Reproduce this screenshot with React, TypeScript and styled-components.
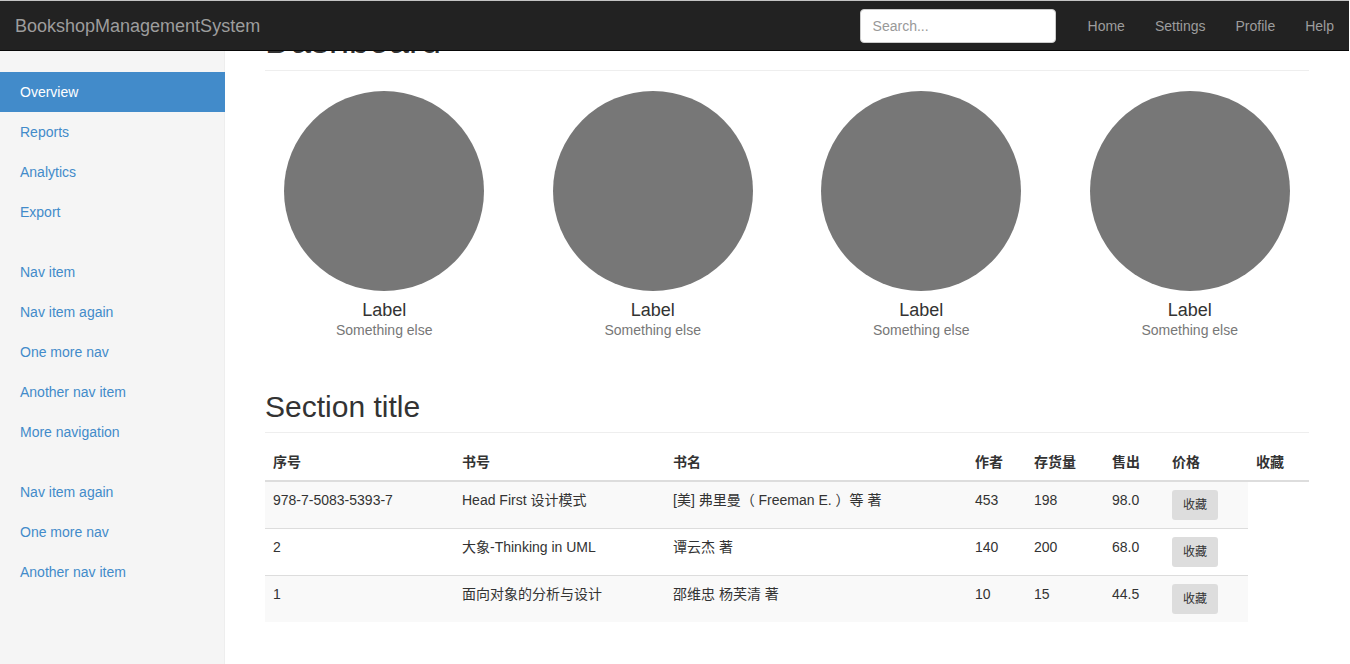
import React from "react";
import styled, { createGlobalStyle } from "styled-components";

const GlobalStyle = createGlobalStyle`
  html, body { margin: 0; padding: 0; }
  body {
    font-family: "Liberation Sans", Arial, "Noto Sans CJK SC", sans-serif;
    font-size: 14px;
    line-height: 1.428571;
    color: #333;
    background: #fff;
    overflow: hidden;
  }
  * { box-sizing: border-box; }
`;

const Navbar = styled.nav`
  position: fixed;
  top: 0;
  left: 0;
  right: 1px;
  height: 51px;
  z-index: 10;
  background: #222;
  border-top: 1px solid #c4c4c4;
  border-bottom: 1px solid #080808;
  display: flex;
  align-items: center;
  padding: 0 0 0 15px;
`;

const Brand = styled.a`
  font-size: 18px;
  line-height: 20px;
  color: #9d9d9d;
  text-decoration: none;
`;

const RightGroup = styled.div`
  margin-left: auto;
  display: flex;
  align-items: center;
`;

const SearchForm = styled.form`
  padding: 0 17px 0 15px;
  margin: 0;
  display: flex;
`;

const SearchInput = styled.input`
  width: 196px;
  height: 34px;
  padding: 6px 12px;
  font-family: inherit;
  font-size: 14px;
  color: #555;
  background: #fff;
  border: 1px solid #ccc;
  border-radius: 4px;
  outline: none;
  &::placeholder { color: #999; }
`;

const NavLinks = styled.ul`
  list-style: none;
  margin: 0;
  padding: 0;
  display: flex;
`;

const NavLink = styled.a`
  display: block;
  padding: 15px;
  line-height: 20px;
  color: #9d9d9d;
  text-decoration: none;
`;

const Page = styled.div`
  display: flex;
  min-height: 100vh;
  margin-right: 1px;
`;

const Sidebar = styled.aside`
  width: 225px;
  flex: none;
  background: #f5f5f5;
  border-right: 1px solid #eee;
  padding-top: 72px;
  min-height: 100vh;
`;

const SideNav = styled.ul`
  list-style: none;
  margin: 0 -1px 20px 0;
  padding: 0;
`;

const SideLink = styled.a<{ $active?: boolean }>`
  display: block;
  padding: 10px 20px;
  line-height: 20px;
  text-decoration: none;
  color: ${(p) => (p.$active ? "#fff" : "#428bca")};
  background: ${(p) => (p.$active ? "#428bca" : "transparent")};
`;

const Main = styled.main`
  flex: 1;
  min-width: 0;
  padding: 21px 40px 0;
`;

const PageHeader = styled.h1`
  margin: 0 0 20px;
  padding-bottom: 9px;
  font-size: 36px;
  font-weight: 500;
  line-height: 1.1;
  border-bottom: 1px solid #eee;
`;

const Placeholders = styled.div`
  display: grid;
  grid-template-columns: repeat(4, 1fr);
  margin: 0 -15px 30px;
  text-align: center;
`;

const Placeholder = styled.div`
  padding: 0 15px 20px;
`;

const Circle = styled.div`
  width: 200px;
  height: 200px;
  margin: 0 auto;
  border-radius: 50%;
  background: #777;
`;

const PlaceholderLabel = styled.h4`
  margin: 9px 0 0;
  font-size: 18px;
  font-weight: 500;
  line-height: 20px;
`;

const Muted = styled.span`
  display: block;
  color: #777;
  line-height: 20px;
`;

const SubHeader = styled.h2`
  margin: 0 0 11px;
  padding-bottom: 9px;
  font-size: 30px;
  font-weight: 500;
  line-height: 33px;
  border-bottom: 1px solid #eee;
`;

const Table = styled.table`
  width: 100%;
  table-layout: fixed;
  border-collapse: collapse;
  border-spacing: 0;
`;

const Col = styled.col<{ $w: number }>`
  width: ${(p) => p.$w}px;
`;

const Th = styled.th`
  text-align: left;
  font-weight: bold;
  padding: 8px;
  line-height: 20px;
  vertical-align: bottom;
  border-bottom: 2px solid #ddd;
  white-space: nowrap;
`;

const Row = styled.tr`
  &:nth-of-type(odd) { background: #f9f9f9; }
`;

const Td = styled.td`
  padding: 8px;
  line-height: 20px;
  vertical-align: top;
  border-top: 1px solid #ddd;
  white-space: nowrap;
`;

const FavButton = styled.button`
  display: block;
  height: 30px;
  padding: 0 11px;
  font-family: inherit;
  font-size: 12px;
  line-height: 30px;
  color: #333;
  background: #ddd;
  border: 0;
  border-radius: 3px;
`;

const group1 = ["Overview", "Reports", "Analytics", "Export"];
const group2 = ["Nav item", "Nav item again", "One more nav", "Another nav item", "More navigation"];
const group3 = ["Nav item again", "One more nav", "Another nav item"];

const headers = ["序号", "书号", "书名", "作者", "存货量", "售出", "价格", "收藏"];
const widths = [189, 211, 302, 59, 78, 60, 84, 61];

const books = [
  ["978-7-5083-5393-7", "Head First 设计模式", "[美] 弗里曼（ Freeman E. ）等 著", "453", "198", "98.0"],
  ["2", "大象-Thinking in UML", "谭云杰 著", "140", "200", "68.0"],
  ["1", "面向对象的分析与设计", "邵维忠 杨芙清 著", "10", "15", "44.5"],
];

export default function App() {
  return (
    <>
      <GlobalStyle />
      <Navbar>
        <Brand href="#">BookshopManagementSystem</Brand>
        <RightGroup>
          <SearchForm onSubmit={(e) => e.preventDefault()}>
            <SearchInput type="text" placeholder="Search..." />
          </SearchForm>
          <NavLinks>
            {["Home", "Settings", "Profile", "Help"].map((l) => (
              <li key={l}>
                <NavLink href="#">{l}</NavLink>
              </li>
            ))}
          </NavLinks>
        </RightGroup>
      </Navbar>
      <Page>
        <Sidebar>
          <SideNav>
            {group1.map((l, i) => (
              <li key={l}>
                <SideLink href="#" $active={i === 0}>{l}</SideLink>
              </li>
            ))}
          </SideNav>
          <SideNav>
            {group2.map((l) => (
              <li key={l}>
                <SideLink href="#">{l}</SideLink>
              </li>
            ))}
          </SideNav>
          <SideNav>
            {group3.map((l) => (
              <li key={l}>
                <SideLink href="#">{l}</SideLink>
              </li>
            ))}
          </SideNav>
        </Sidebar>
        <Main>
          <PageHeader>Dashboard</PageHeader>
          <Placeholders>
            {[0, 1, 2, 3].map((i) => (
              <Placeholder key={i}>
                <Circle />
                <PlaceholderLabel>Label</PlaceholderLabel>
                <Muted>Something else</Muted>
              </Placeholder>
            ))}
          </Placeholders>
          <SubHeader>Section title</SubHeader>
          <Table>
            <colgroup>
              {widths.map((w, i) => (
                <Col key={i} $w={w} />
              ))}
            </colgroup>
            <thead>
              <tr>
                {headers.map((h) => (
                  <Th key={h}>{h}</Th>
                ))}
              </tr>
            </thead>
            <tbody>
              {books.map((b, i) => (
                <Row key={i}>
                  {b.map((c, j) => (
                    <Td key={j}>{c}</Td>
                  ))}
                  <Td>
                    <FavButton>收藏</FavButton>
                  </Td>
                </Row>
              ))}
            </tbody>
          </Table>
        </Main>
      </Page>
    </>
  );
}
